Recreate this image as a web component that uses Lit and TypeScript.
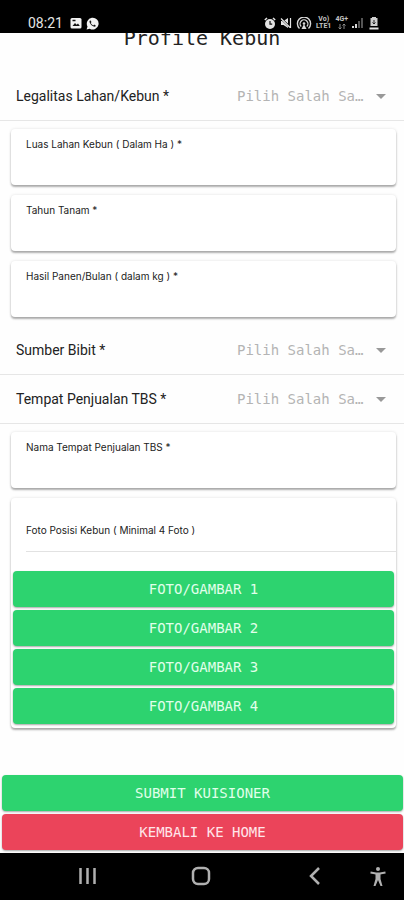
import { LitElement, html, css } from "lit";
import { customElement, property } from "lit/decorators.js";

@customElement("status-bar")
class StatusBar extends LitElement {
  static styles = css`
    :host {
      display: flex;
      justify-content: space-between;
      align-items: flex-end;
      box-sizing: border-box;
      height: 33px;
      padding: 0 24px 2px 28px;
      background: #000;
      color: #e4e4e4;
      font-family: Roboto, "Liberation Sans", sans-serif;
    }
    .group {
      display: flex;
      align-items: center;
      gap: 4px;
      height: 16px;
    }
    .time {
      font-size: 14px;
      line-height: 16px;
      margin-right: 3px;
    }
    svg {
      display: block;
    }
    .net {
      display: flex;
      flex-direction: column;
      align-items: center;
      font-size: 7px;
      line-height: 7px;
      font-weight: 700;
      color: #c4c4c4;
    }
  `;

  render() {
    return html`
      <div class="group">
        <span class="time">08:21</span>
        <svg width="12" height="12" viewBox="0 0 12 12" aria-hidden="true">
          <rect x="0.500" y="1" width="11" height="10.500" rx="1.500" fill="#f2f2f2" />
          <path d="M2.500 9 5 6l1.600 1.800L8 6.500 9.800 9z" fill="#111" />
          <path d="M2.500 3.500h3" stroke="#111" stroke-width="1.500" />
        </svg>
        <svg width="13" height="13" viewBox="0 0 13 13" aria-hidden="true">
          <path d="M.6 12.4 1.5 9.4A5.9 5.9 0 1 1 3.700 11.700z" fill="#f2f2f2" />
          <path
            d="M4.300 3.200c-.8.5-1 1.400-.6 2.400.8 2 2 3.200 4 4 1 .3 1.900 0 2.200-.9l-1.700-1.100-.8.8C6.200 7.900 5.300 7 4.800 5.900l.7-.8z"
            fill="#111"
          />
        </svg>
      </div>
      <div class="group">
        <svg width="12" height="13" viewBox="0 0 12 13" aria-hidden="true">
          <path d="M.8 3 3 1M11.200 3 9 1" stroke="#e4e4e4" stroke-width="1.500" />
          <circle cx="6" cy="7" r="5" fill="#e4e4e4" />
          <path d="M6 4v3.200h2.200" fill="none" stroke="#111" stroke-width="1.200" />
        </svg>
        <svg width="12" height="12" viewBox="0 0 12 12" aria-hidden="true">
          <path d="M1 4h2.500L8 1v10L3.500 8H1z" fill="#e4e4e4" />
          <path d="M.5 1 11 11" stroke="#000" stroke-width="2" />
          <path d="M1 1.500 10 10.500M10.500 1v10" stroke="#e4e4e4" stroke-width="1.200" />
        </svg>
        <svg width="16" height="13" viewBox="0 0 16 13" fill="none" stroke="#d8d8d8" aria-hidden="true">
          <path d="M3.500 11.500A6.600 6.600 0 1 1 12.500 11.500" stroke-width="1.400" />
          <path d="M5.200 9.500A3.900 3.900 0 1 1 10.800 9.500" stroke-width="1.300" />
          <path d="M8 7 5.500 12h5z" fill="#d8d8d8" stroke="none" />
          <circle cx="8" cy="6.500" r="1.300" fill="#d8d8d8" stroke="none" />
        </svg>
        <span class="net"><span>Vo)</span><span>LTE1</span></span>
        <span class="net">
          <span>4G+</span>
          <svg width="10" height="7" viewBox="0 0 10 7" fill="none" stroke="#8a8a8a" aria-hidden="true">
            <path d="M3 1v5M1.500 4.500 3 6l1.500-1.500M7 6V1M5.500 2.500 7 1l1.500 1.500" />
          </svg>
        </span>
        <svg width="12" height="12" viewBox="0 0 12 12" aria-hidden="true">
          <path d="M0 11V9h2v2zM3 11V7h2v4z" fill="#d8d8d8" />
          <path d="M6 11V4h2v7zM9 11V1h2v10z" fill="#555" />
        </svg>
        <svg width="12" height="13" viewBox="0 0 12 13" aria-hidden="true">
          <path d="M4 0h4v1h1.500v8h-7V1H4z" fill="#cfcfcf" />
          <path d="M6 3v3M4.500 5.500 6 7l1.500-1.500" fill="none" stroke="#222" />
          <path d="M1.500 11.500h9" stroke="#e4e4e4" stroke-width="2" />
        </svg>
      </div>
    `;
  }
}

@customElement("select-row")
class SelectRow extends LitElement {
  @property() label = "";

  static styles = css`
    :host {
      display: flex;
      align-items: center;
      justify-content: space-between;
      box-sizing: border-box;
      height: 49px;
      padding: 0 18px 0 16px;
      border-bottom: 1px solid #e6e6e6;
    }
    label {
      font: 14px/20px Roboto, "Liberation Sans", sans-serif;
      color: #222;
    }
    .field {
      display: flex;
      align-items: center;
      gap: 8px;
    }
    select {
      appearance: none;
      width: 131px;
      padding: 0;
      border: 0;
      background: none;
      color: #b4b4b4;
      font: 14px/20px "DejaVu Sans Mono", "Liberation Mono", monospace;
      text-overflow: ellipsis;
      overflow: hidden;
      white-space: nowrap;
    }
    .caret {
      border: 5px solid transparent;
      border-top-color: #999;
      border-bottom: 0;
    }
  `;

  render() {
    return html`
      <label for="choice">${this.label}</label>
      <div class="field">
        <select id="choice">
          <option>Pilih Salah Satu</option>
        </select>
        <span class="caret"></span>
      </div>
    `;
  }
}

@customElement("input-card")
class InputCard extends LitElement {
  @property() label = "";

  static styles = css`
    :host {
      display: flex;
      flex-direction: column;
      box-sizing: border-box;
      height: 56px;
      padding: 8px 15px;
      border-radius: 4px;
      background: #fff;
      box-shadow: 0 2px 2px rgba(0, 0, 0, 0.3), 0 0 3px rgba(0, 0, 0, 0.12);
    }
    label {
      font: 10px/14px Inter, Roboto, sans-serif;
      color: #222;
    }
    input {
      flex: 1;
      min-height: 0;
      padding: 0;
      border: 0;
      outline: 0;
      background: none;
      font: 14px/20px "DejaVu Sans Mono", monospace;
    }
  `;

  render() {
    return html`
      <label for="value">${this.label}</label>
      <input id="value" type="text" />
    `;
  }
}

@customElement("nav-bar")
class NavBar extends LitElement {
  static styles = css`
    :host {
      display: flex;
      align-items: center;
      gap: 39px;
      box-sizing: border-box;
      height: 48px;
      padding: 0 14px 2px 75px;
      background: #000;
    }
    .keys {
      flex: 1;
      display: flex;
      justify-content: space-between;
    }
    button {
      display: block;
      padding: 0;
      border: 0;
      background: none;
    }
    svg {
      display: block;
      fill: none;
      stroke: #b0b0b0;
      stroke-width: 2.500;
    }
  `;

  render() {
    return html`
      <div class="keys">
        <button aria-label="Recents">
          <svg width="24" height="24" viewBox="0 0 24 24"><path d="M5.500 4v16M12.500 4v16M19.500 4v16" /></svg>
        </button>
        <button aria-label="Home">
          <svg width="24" height="24" viewBox="0 0 24 24"><rect x="4" y="4" width="16" height="16" rx="5" /></svg>
        </button>
        <button aria-label="Back">
          <svg width="24" height="24" viewBox="0 0 24 24"><path d="M16 4 8 12l8 8" /></svg>
        </button>
      </div>
      <button aria-label="Accessibility">
        <svg width="24" height="24" viewBox="0 0 24 24">
          <circle cx="12" cy="5" r="2" fill="#b0b0b0" stroke="none" />
          <path d="M4.500 8.500 10 9.500h4l5.500-1" stroke-width="2" />
          <path d="M9.500 9h5v6l2 7h-2L12 16l-2.500 6h-2l2-7z" fill="#b0b0b0" stroke="none" />
        </svg>
      </button>
    `;
  }
}

@customElement("app-root")
class AppRoot extends LitElement {
  static styles = css`
    :host {
      display: flex;
      flex-direction: column;
      min-height: 100vh;
      background: #fefefe;
    }
    main {
      flex: 1;
      overflow: hidden;
    }
    h1 {
      margin: -9px 0 20px;
      font: 20px/28px "DejaVu Sans Mono", "Liberation Mono", monospace;
      text-align: center;
      color: #222;
    }
    .cards {
      display: flex;
      flex-direction: column;
      gap: 10px;
      padding: 8px 8px 9px 11px;
    }
    .photos {
      display: flex;
      flex-direction: column;
      gap: 3px;
      padding: 20px 2px 4px;
      border-radius: 4px;
      background: #fff;
      box-shadow: 0 2px 2px rgba(0, 0, 0, 0.3), 0 0 3px rgba(0, 0, 0, 0.12);
    }
    h2 {
      margin: 0 -2px 16px 13px;
      padding: 5px 0 14px;
      border-bottom: 1px solid #e2e2e2;
      font: 10px/14px Inter, Roboto, sans-serif;
      color: #222;
    }
    .actions {
      display: flex;
      flex-direction: column;
      gap: 3px;
      padding: 38px 1px 3px 2px;
    }
    .btn {
      height: 36px;
      padding: 0;
      border: 0;
      border-radius: 4px;
      background: #2dd36f;
      color: #e0ffea;
      font: 14px/20px "DejaVu Sans Mono", "Liberation Mono", monospace;
      text-transform: uppercase;
      box-shadow: 0 1px 2px rgba(0, 0, 0, 0.35);
    }
    .danger {
      background: #eb445a;
      color: #ffe6ea;
    }
  `;

  render() {
    return html`
      <status-bar></status-bar>
      <main>
        <h1>Profile Kebun</h1>
        <select-row label="Legalitas Lahan/Kebun *"></select-row>
        <div class="cards">
          <input-card label="Luas Lahan Kebun ( Dalam Ha ) *"></input-card>
          <input-card label="Tahun Tanam *"></input-card>
          <input-card label="Hasil Panen/Bulan ( dalam kg ) *"></input-card>
        </div>
        <select-row label="Sumber Bibit *"></select-row>
        <select-row label="Tempat Penjualan TBS *"></select-row>
        <div class="cards">
          <input-card label="Nama Tempat Penjualan TBS *"></input-card>
          <section class="photos">
            <h2>Foto Posisi Kebun ( Minimal 4 Foto )</h2>
            ${[1, 2, 3, 4].map((n) => html`<button class="btn">Foto/Gambar ${n}</button>`)}
          </section>
        </div>
        <div class="actions">
          <button class="btn">Submit Kuisioner</button>
          <button class="btn danger">Kembali ke Home</button>
        </div>
      </main>
      <nav-bar></nav-bar>
    `;
  }
}
